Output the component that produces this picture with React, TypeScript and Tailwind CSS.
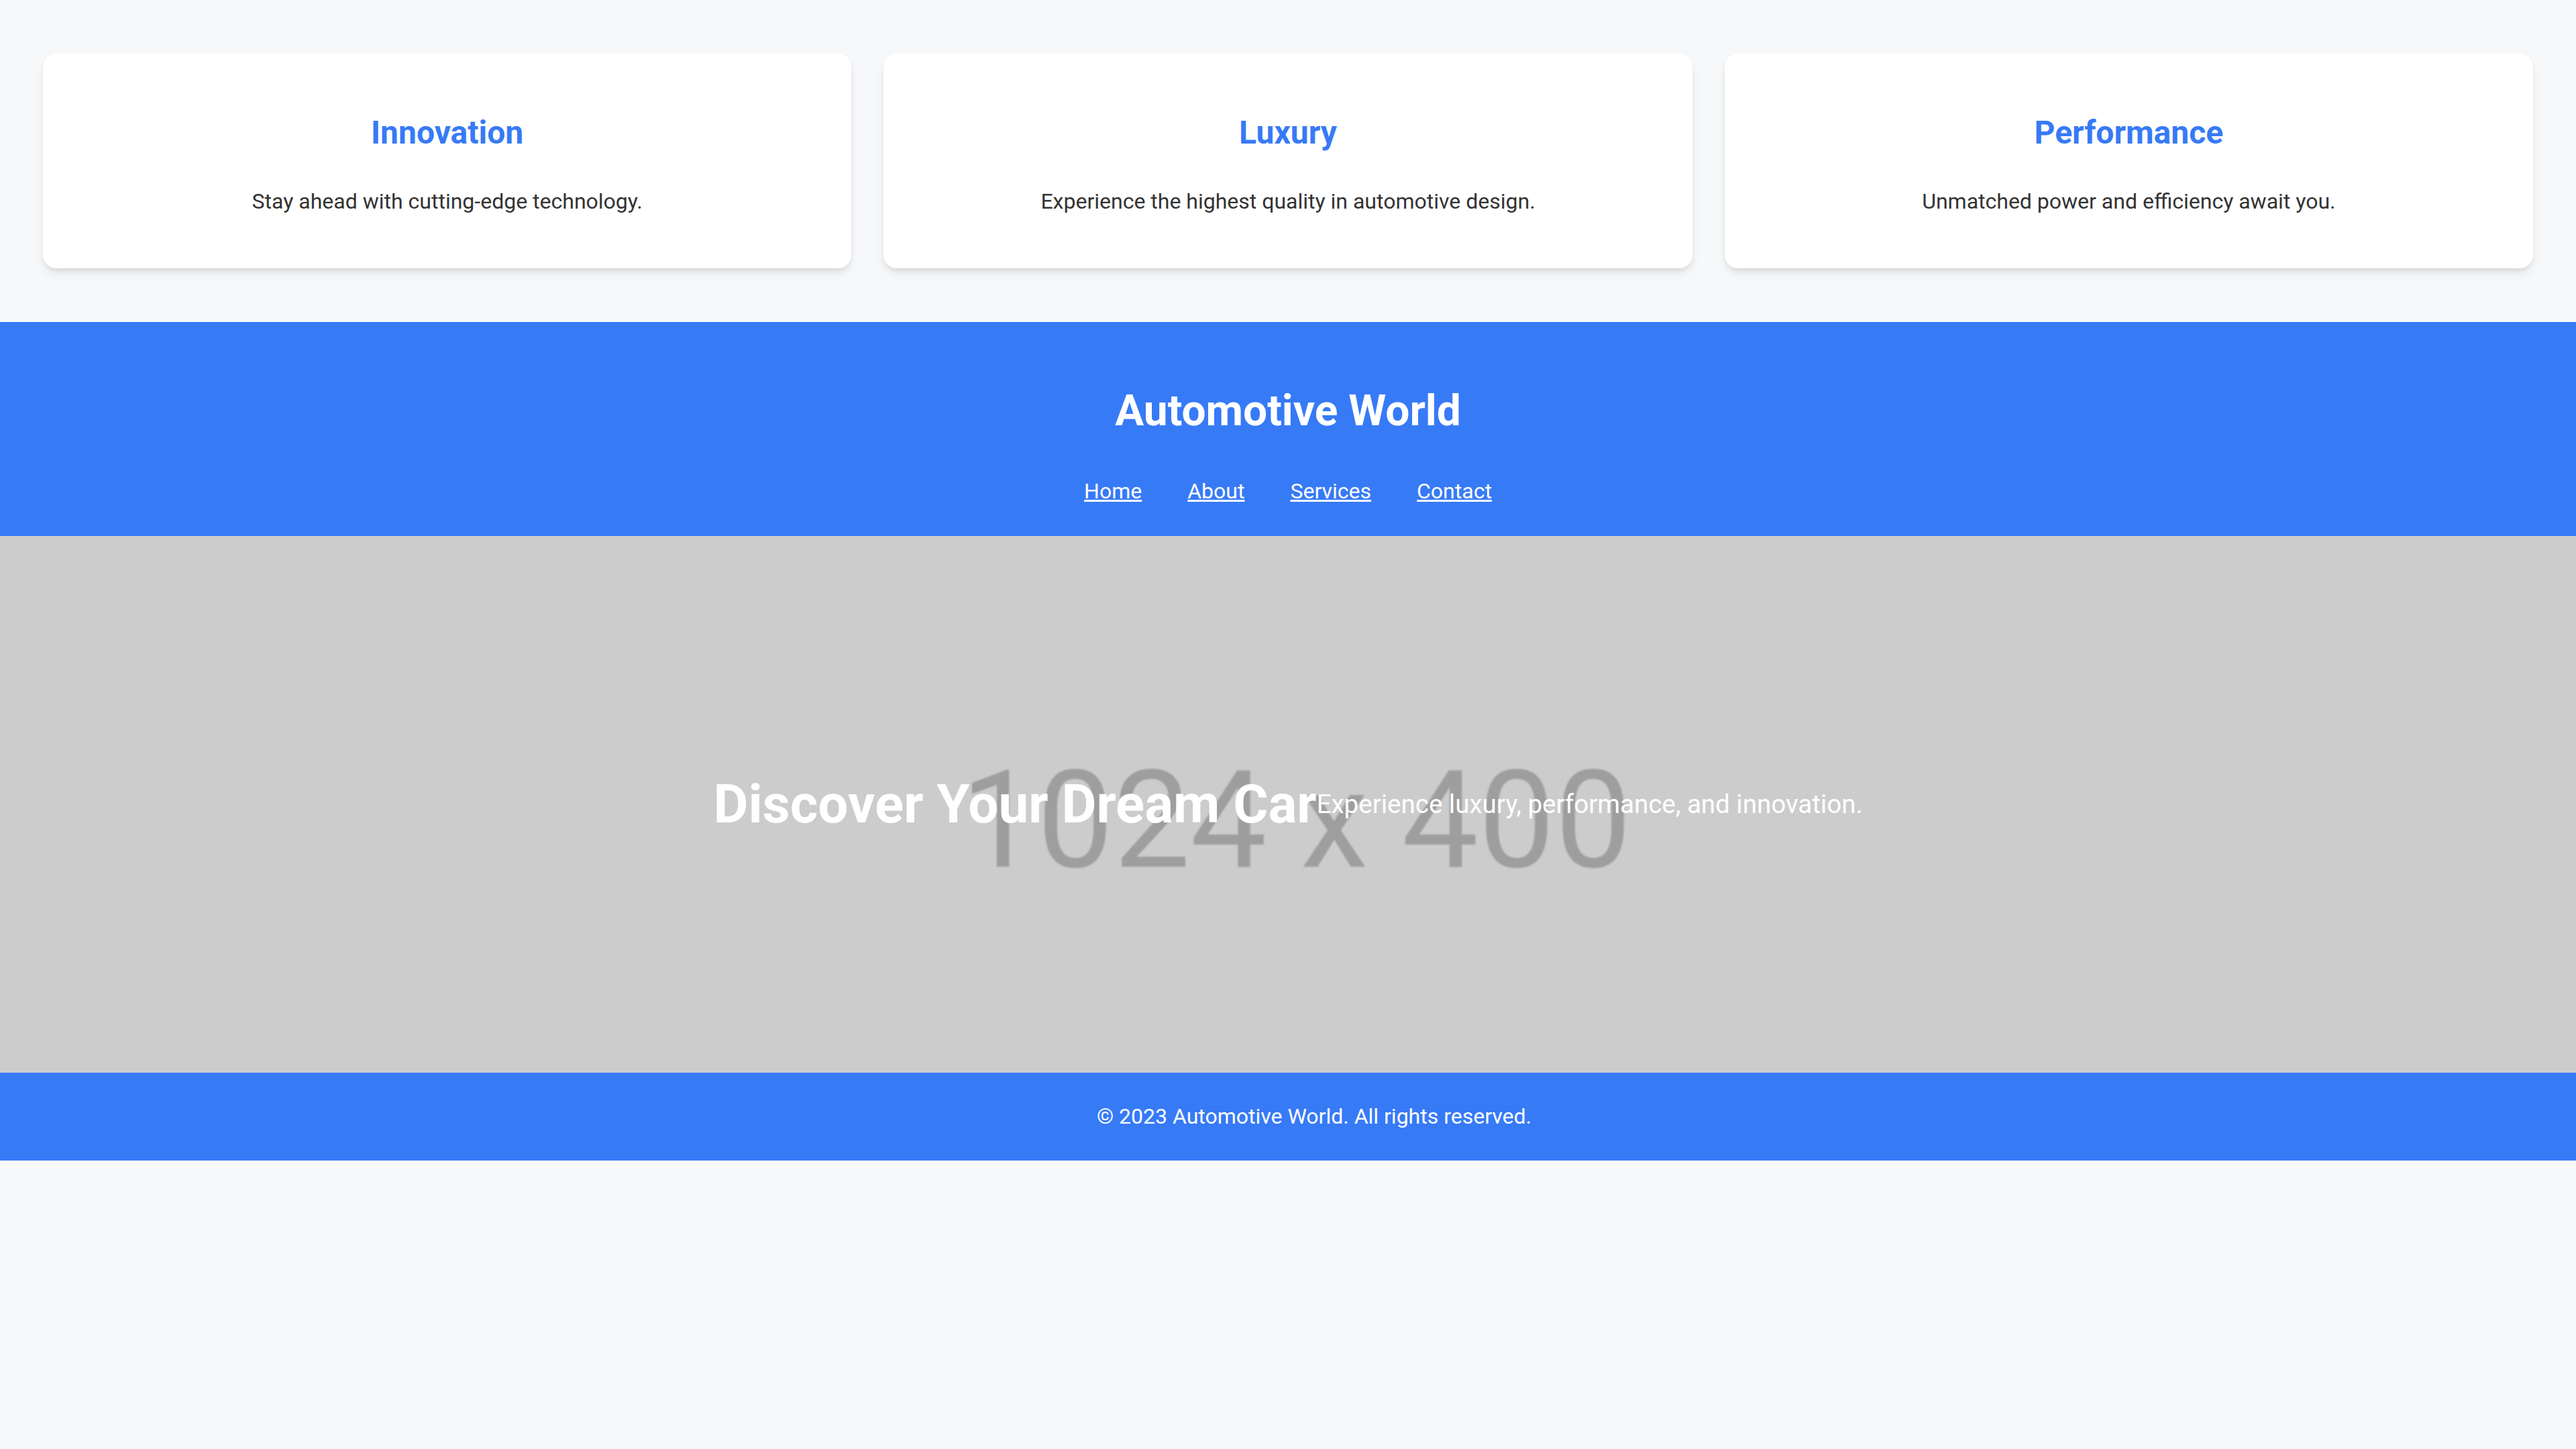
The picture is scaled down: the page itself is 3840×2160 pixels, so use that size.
import React from "react";

const cards = [
  { title: "Innovation", text: "Stay ahead with cutting-edge technology." },
  { title: "Luxury", text: "Experience the highest quality in automotive design." },
  { title: "Performance", text: "Unmatched power and efficiency await you." },
];

export default function App() {
  return (
    <div className="min-h-screen bg-[#f7f8fa] font-['Roboto',sans-serif]">
      <section className="grid grid-cols-3 gap-12 px-16 py-20">
        {cards.map((c) => (
          <div
            key={c.title}
            className="rounded-[20px] bg-white text-center pt-[86px] pb-[76px] shadow-[0_8px_14px_-2px_rgba(0,0,0,0.1),0_4px_8px_-4px_rgba(0,0,0,0.1)]"
          >
            <h3 className="text-[48px] leading-[64px] font-bold text-[#377af6]">{c.title}</h3>
            <p className="mt-[46px] text-[32px] leading-[48px] text-[#333333]">{c.text}</p>
          </div>
        ))}
      </section>

      <header className="bg-[#377af6] text-white text-center pt-[85px] pb-[43px]">
        <h1 className="text-[64px] leading-[96px] font-bold">Automotive World</h1>
        <nav className="mt-[47px] flex justify-center gap-[68px] text-[32px] leading-[48px]">
          <a href="#" className="underline">Home</a>
          <a href="#" className="underline">About</a>
          <a href="#" className="underline">Services</a>
          <a href="#" className="underline">Contact</a>
        </nav>
      </header>

      <section className="relative h-[800px] bg-[#cccccc] overflow-hidden">
        <div className="absolute inset-0 flex items-center justify-center pt-[48px] pl-[24px]">
          <span className="text-[203px] leading-none text-[#9e9e9e] blur-[1px] select-none">1024 x 400</span>
        </div>
        <div className="relative h-full flex items-center justify-center text-white">
          <h2 className="text-[80px] leading-[120px] font-bold">Discover Your Dream Car</h2>
          <p className="text-[38.5px] leading-[58px]">Experience luxury, performance, and innovation.</p>
        </div>
      </section>

      <footer className="bg-[#377af6] text-white text-center py-10 pl-[78px] text-[32px] leading-[51px]">
        © 2023 Automotive World. All rights reserved.
      </footer>
    </div>
  );
}
